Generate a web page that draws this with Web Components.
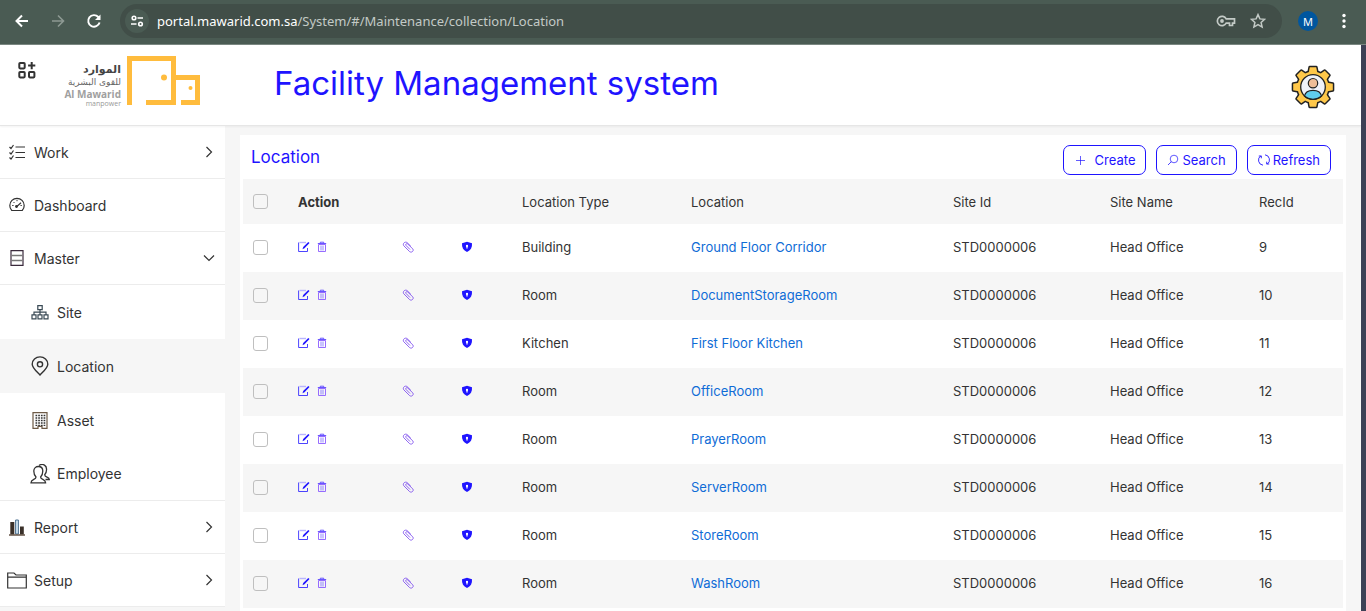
<!DOCTYPE html>
<html lang="en">
<head>
<meta charset="utf-8">
<title>Facility Management system</title>
<style>
  body { margin: 0; height: 100vh; overflow: hidden; font-family: Inter, "Noto Sans", sans-serif; font-size: 13px; color: #333; background: #f6f6f6; --accent: #1f14ff; --line: #ececec; }
</style>
</head>
<body>
<facility-app></facility-app>
<script>
const ICONS = {
  back: ['0 0 16 16', '<path d="M14 8H2.5M8 2.5L2.5 8L8 13.500" fill="none" stroke="currentColor" stroke-width="2"/>'],
  forward: ['0 0 16 16', '<path d="M2 8h11.500M8 2.500L13.500 8L8 13.500" fill="none" stroke="currentColor" stroke-width="1.600"/>'],
  reload: ['0 0 16 16', '<path d="M13.600 9.500A5.800 5.800 0 1 1 12.300 4L13.600 5.400" fill="none" stroke="currentColor" stroke-width="1.900"/><path d="M14.500 1.500V7H9z" fill="currentColor"/>'],
  tune: ['0 0 14 14', '<g fill="none" stroke="currentColor" stroke-width="1.600"><circle cx="4" cy="4" r="1.800"/><path d="M7.500 4H13M1 10h5.500"/><circle cx="10.500" cy="10" r="1.800"/></g>'],
  key: ['0 0 20 14', '<g fill="none" stroke="currentColor" stroke-width="1.700"><path d="M10.200 4.800A4.700 4.700 0 1 0 10.200 9.200H12.500V9.200H13.500V11.500H16.500V9.200H18.500V4.800Z"/></g><circle cx="6" cy="7" r="1.900" fill="currentColor"/>'],
  star: ['0 0 16 16', '<path d="M8 1.600l1.900 4.300 4.700.450-3.500 3.100 1 4.600L8 11.700l-4.100 2.350 1-4.600L1.400 6.350l4.700-.450z" fill="none" stroke="currentColor" stroke-width="1.500"/>'],
  dots: ['0 0 16 16', '<g fill="currentColor"><circle cx="8" cy="2.500" r="1.700"/><circle cx="8" cy="8" r="1.700"/><circle cx="8" cy="13.500" r="1.700"/></g>'],
  apps: ['0 0 18 18', '<g fill="none" stroke="currentColor" stroke-width="2"><rect x="1.300" y="2" width="5.400" height="5.400" rx=".8"/><rect x="1.300" y="11" width="5.400" height="5.400" rx=".8"/><rect x="11" y="11" width="5.400" height="5.400" rx=".8"/><path d="M13.700 1v7.200M10.100 4.600h7.200"/></g>'],
  work: ['0 0 16 16', '<g fill="none" stroke="currentColor" stroke-width="1.200"><path d="M6.500 3H16M6.500 8.500H16M6.500 13.500H16M.5 3l1.500 1.500L4.500 1M.5 8.500L2 10l2.500-3.500M.5 13.500L2 15l2.500-3.500"/></g>'],
  dashboard: ['0 0 16 16', '<path d="M2.800 13.500A7.200 7.200 0 1 1 13.200 13.500Z" fill="none" stroke="currentColor" stroke-width="1.200"/><path d="M8 2.800v1.400M3.200 8.500H4.600M4.500 5l1 1M11.500 8.500h1.300" stroke="currentColor"/><path d="M7 10.200L12 5.800" stroke="currentColor" stroke-width="1.200"/><circle cx="7.500" cy="9.500" r="1.400" fill="currentColor"/>'],
  master: ['0 0 16 16', '<path d="M2 .6H14V15.400H2Z" fill="none" stroke="#3a2a3c" stroke-width="1.200"/><path d="M2.500 5.500h11M2.500 10.500h11" stroke="#777" stroke-width="1.700"/>'],
  site: ['0 0 18 16', '<g fill="none" stroke="#3a4a55" stroke-width="1.200"><path d="M6.800 1.600h4.400v4H6.800zM1 10.800h4v4H1zM7 10.800h4v4H7zM13 10.800h4v4h-4zM9 5.600v5M3 10.800V8.200h12v2.600"/></g>'],
  location: ['0 0 18 20', '<path d="M9 19C6.800 16.600 1.200 12 1.200 8.200a7.800 7.300 0 0 1 15.600 0C16.800 12 11.200 16.600 9 19Z" fill="none" stroke="currentColor" stroke-width="1.400"/><circle cx="9" cy="8.300" r="2.600" fill="none" stroke="currentColor" stroke-width="1.400"/>'],
  asset: ['0 0 16 17', '<path d="M1 .7h14v15.600h-5v-2H6v2H1Z" fill="none" stroke="#6d5a46" stroke-width="1.200"/><path d="M3.500 3.500h10M3.500 6h10M3.500 8.500h10M3.500 11h10M3.500 13.300h10" stroke="currentColor" stroke-width="1.300" stroke-dasharray="1.700 1"/>'],
  employee: ['0 0 20 20', '<g fill="none" stroke="currentColor" stroke-width="1.300"><path d="M1 18.800c0-4 5-2.800 5-5.800C4.500 11.500 3.800 9.500 3.800 7c0-6 9-6 9 0 0 2.500-.8 4.500-2.200 6 0 3 5 1.800 5 5.800z"/><path d="M9 1.500c4-2.500 8 0 7.500 4.500 0 2-.700 3.500-1.800 4.700 0 3 4.600 1.800 4.600 4.800h-3.800"/></g>'],
  report: ['0 0 16 17', '<path d="M1.300 3h4v12.500h-4zM11 7.500h3.800v8H11z" fill="#3a3029"/><path d="M6.600 1h2.800v14H6.600z" fill="#cfe4f2" stroke="#4a6f8f"/><path d="M0 16h16" stroke="#5a4738" stroke-width="1.400"/>'],
  setup: ['0 0 20 17', '<path d="M.7 16V1H7l2 2h10.300v13ZM.7 5.200h18.600" fill="none" stroke="currentColor" stroke-width="1.200"/>'],
  right: ['0 0 12 12', '<path d="M3.500 1L8.500 6L3.500 11" fill="none" stroke="currentColor" stroke-width="1.200"/>'],
  down: ['0 0 12 12', '<path d="M1 3.500L6 8.500L11 3.500" fill="none" stroke="currentColor" stroke-width="1.200"/>'],
  plus: ['0 0 12 12', '<path d="M6.500 2v9M2 6.500h9" stroke="currentColor" stroke-width=".7"/>'],
  search: ['0 0 12 12', '<circle cx="7" cy="5" r="3.800" fill="none" stroke="currentColor" stroke-width=".7"/><path d="M4.300 7.700L1 11" stroke="currentColor" stroke-width=".8"/>'],
  refresh: ['0 0 12 12', '<path d="M5 11.200A5.100 5.100 0 0 1 2.900 1.800M7 .8a5.100 5.100 0 0 1 2.100 9.400M.8 2h2.500v2.300M11.200 10H8.700V7.700" fill="none" stroke="currentColor" stroke-width=".9"/>'],
  edit: ['0 0 12 12', '<path d="M8 1.500H1.500" stroke="#b9b4ff" stroke-width="1.400"/><path d="M.6 1.500v9h8.900V7" fill="none" stroke="currentColor" stroke-width=".8"/><path d="M4.500 8.200l.7-2.200L10.300.9l1.200 1.200L6.500 7.300z" fill="currentColor"/>'],
  trash: ['0 0 10 12', '<path d="M1.500 3.500h7v7h-7z" fill="none" stroke="#8a5cff" stroke-width=".9"/><path d="M.8 2.500h8.400M3.300 2.300V1.200h3.400v1.100" fill="none" stroke="#5a45ff" stroke-width=".9"/><path d="M4 4.500v5M6 4.500v5" stroke="#7a6bff" stroke-width=".8"/>'],
  clip: ['0 0 12 12', '<path d="M8.800 5.200L5 1.500C3 .2.300 2.600 1.700 4.700L7.600 10.600c2 1.500 4.500-.7 3.300-2.600L5.600 2.900C4.500 2.200 3.200 3.300 3.900 4.300L8 8.500" fill="none" stroke="#7440ee" stroke-width=".8"/>'],
  shield: ['0 0 12 12', '<path d="M6 .8L11 2.200C11.300 6.500 9.600 9.400 6 11C2.400 9.400.700 6.500 1 2.200Z" fill="currentColor"/><path d="M6 4v3.400" stroke="#fff" stroke-width="1.200"/><circle cx="6" cy="4.900" r="1.100" fill="#fff"/>'],
  logo: ['0 0 73 49', '<path d="M2.500 49V2.500H46.500V46.500H19M49 21.500H70.500V46.500H54" fill="none" stroke="#ffbc3d" stroke-width="5"/><circle cx="37" cy="21.500" r="3" fill="#ffbc3d"/><circle cx="63.500" cy="32" r="2" fill="#ffbc3d"/>'],
};
const tooth = 'M17.500 9L18.800 2.200H25.200L26.500 9Z';
const gear = [0, 45, 90, 135, 180, 225, 270, 315].map(a => `<path d="${tooth}" transform="rotate(${a} 22 22)"/>`).join('') + '<circle cx="22" cy="22" r="15.500"/>';
ICONS.gear = ['0 0 44 44', `<g fill="#222" stroke="#222" stroke-width="3" stroke-linejoin="round">${gear}</g><g fill="#ffc84a">${gear}</g><circle cx="22" cy="22" r="12.300" fill="#f0f2fa" stroke="#222" stroke-width="1.300"/><path d="M13.500 31C15 23.500 29 23.500 30.500 31C26 35.300 18 35.300 13.500 31Z" fill="#60cdee" stroke="#222" stroke-width="1.200"/><circle cx="22" cy="18.200" r="4.700" fill="#efbd98" stroke="#222" stroke-width="1.200"/>`];

const define = (name, html, setup) => customElements.define(name, class extends HTMLElement {
  connectedCallback() {
    if (this.shadowRoot) return;
    const t = document.createElement('template');
    t.innerHTML = typeof html === 'function' ? html(this) : html;
    this.attachShadow({ mode: 'open' }).append(t.content.cloneNode(true));
    if (setup) setup(this);
  }
});

define('ui-icon', el => {
  const [box, body] = ICONS[el.getAttribute('name')];
  return `<style>:host{display:inline-flex;flex:none;width:16px;height:16px}svg{width:100%;height:100%}</style><svg viewBox="${box}" aria-hidden="true">${body}</svg>`;
});

define('browser-bar', `<style>
  :host{display:flex;align-items:center;box-sizing:border-box;height:45px;padding:0 14px 2px 14px;background:#4a5b53;border-bottom:1px solid #7a8781;color:#fff;font:13px "Noto Sans",sans-serif}
  button{all:unset;display:flex;width:16px;height:16px;margin-right:20px}
  .next{color:#8d9993}
  .reload{margin-right:28px}
  form{flex:1;display:flex;align-items:center;height:34px;margin:0 16px 0 -10px;padding:0 16px 0 5px;border-radius:17px;background:#414e48;box-sizing:border-box}
  .tune{display:flex;align-items:center;justify-content:center;width:24px;height:24px;border-radius:50%;background:#4a5b53;margin-right:8px}
  .tune ui-icon{width:14px;height:14px}
  .url{flex:1;color:#c3cac6;white-space:nowrap}.url b{font-weight:400;color:#fff}
  .key{width:20px;height:14px;margin-right:14px;color:#c3cac6}.star{color:#c3cac6}
  .me{display:flex;align-items:center;justify-content:center;width:20px;height:20px;border-radius:50%;background:#00569f;font-size:11px;margin-right:18px}
  .menu{margin-right:0}
</style>
<button aria-label="Back"><ui-icon name="back"></ui-icon></button><button class="next" aria-label="Forward"><ui-icon name="forward"></ui-icon></button><button class="reload" aria-label="Reload"><ui-icon name="reload"></ui-icon></button>
<form><span class="tune"><ui-icon name="tune"></ui-icon></span><span class="url"><b>portal.mawarid.com.sa</b>/System/#/Maintenance/collection/Location</span><ui-icon class="key" name="key"></ui-icon><ui-icon class="star" name="star"></ui-icon></form>
<span class="me">M</span><button class="menu" aria-label="Menu"><ui-icon name="dots"></ui-icon></button>`);

define('brand-logo', `<style>
  :host{display:flex;align-items:flex-start;gap:6px}
  .t{display:flex;flex-direction:column;align-items:flex-end;width:56px;padding-top:8px;white-space:nowrap;color:#999}
  .a{font:bold 11px/12px "DejaVu Sans",sans-serif;color:#444}
  .b{font:9px/13px "DejaVu Sans",sans-serif;color:#666}
  .c{font:bold 10px/11px "Open Sans",sans-serif;color:#a0a0a0}
  .d{font:7px/8px "Open Sans",sans-serif}
  ui-icon{width:73px;height:49px}
</style><div class="t"><span class="a" lang="ar" dir="rtl">الموارد</span><span class="b" lang="ar" dir="rtl">للقوى البشرية</span><span class="c">Al Mawarid</span><span class="d">manpower</span></div><ui-icon name="logo"></ui-icon>`);

define('app-header', `<style>
  :host{display:flex;align-items:flex-start;box-sizing:border-box;height:81px;padding:0 26px 0 18px;background:#fff;border-bottom:1px solid #e6e6e6;box-shadow:0 1px 2px #0000000d;position:relative}
  button{all:unset;display:flex}
  .apps{padding-top:16px;margin-right:29px}.apps ui-icon{width:18px;height:18px}
  brand-logo{padding-top:11px}
  h1{flex:1;margin:0 0 0 74px;font-weight:400;font-size:33px;line-height:76px;color:var(--accent);white-space:nowrap}
  .user{padding-top:20px}.user ui-icon{width:44px;height:44px}
</style><button class="apps" aria-label="Applications"><ui-icon name="apps"></ui-icon></button><brand-logo></brand-logo><h1>Facility Management system</h1><button class="user" aria-label="Account"><ui-icon name="gear"></ui-icon></button>`);

define('nav-item', el => `<style>
  :host{display:block;background:#fff}
  :host([selected]){background:#f6f6f6}
  a{display:flex;align-items:center;box-sizing:border-box;height:53px;padding:0 10px 0 7px;border-bottom:1px solid var(--line);color:#333;text-decoration:none;font-size:14px}
  :host([sub]) a{height:54px;padding-left:30px;border:0}
  :host([last]) a{border-bottom:1px solid var(--line)}
  .i{display:flex;justify-content:center;width:20px;margin-right:7px}
  .text{flex:1}
  .chev{width:12px;height:12px}
  .work,.dashboard,.master{width:16px}.site,.location{width:18px}.location,.employee{width:20px;height:20px}.asset,.report{height:17px}.setup{width:20px;height:17px}
</style><a href="#${el.getAttribute('icon')}"><span class="i"><ui-icon class="${el.getAttribute('icon')}" name="${el.getAttribute('icon')}"></ui-icon></span><span class="text"><slot></slot></span>${el.hasAttribute('chevron') ? `<ui-icon class="chev" name="${el.getAttribute('chevron')}"></ui-icon>` : ''}</a>`);

define('side-nav', `<style>:host{display:block;width:225px;flex:none}nav{background:#fff}</style><nav>
<nav-item icon="work" chevron="right">Work</nav-item><nav-item icon="dashboard">Dashboard</nav-item><nav-item icon="master" chevron="down">Master</nav-item>
<nav-item sub icon="site">Site</nav-item><nav-item sub selected icon="location">Location</nav-item><nav-item sub icon="asset">Asset</nav-item><nav-item sub last icon="employee">Employee</nav-item>
<nav-item icon="report" chevron="right">Report</nav-item><nav-item icon="setup" chevron="right">Setup</nav-item></nav>`);

define('tool-button', el => `<style>
  button{display:flex;align-items:center;box-sizing:border-box;height:30px;padding:0 10px;gap:3px;border:1px solid var(--accent);border-radius:7px;background:#fff;color:var(--accent);font:inherit;white-space:nowrap}
  :host([icon=plus]) button{gap:9px}
  ui-icon{width:12px;height:12px}
</style><button><ui-icon name="${el.getAttribute('icon')}"></ui-icon><slot></slot></button>`);

const ROWS = [['Building','Ground Floor Corridor',9],['Room','DocumentStorageRoom',10],['Kitchen','First Floor Kitchen',11],['Room','OfficeRoom',12],['Room','PrayerRoom',13],['Room','ServerRoom',14],['Room','StoreRoom',15],['Room','WashRoom',16]];

define('location-table', () => `<style>
  :host{display:block}
  table{width:100%;table-layout:fixed;border-collapse:collapse}
  th,td{padding:0;text-align:left;font-weight:400;white-space:nowrap}
  th{height:45px;background:#f6f6f6}td{height:46px;padding-bottom:2px}
  th.act{font-weight:700}
  tbody tr:nth-child(even){background:#f6f6f6}
  .check{width:55px}.edit{width:104px}.clip{width:59px}.shield{width:61px}.type{width:169px}.site{width:157px}.name{width:149px}.rec{width:84px}
  th:first-child,td:first-child{padding-left:10px}
  input{appearance:none;display:block;width:15px;height:15px;margin:0;border:1px solid #bfbfbf;border-radius:3px;background:#fff0}
  .acts{display:flex;gap:7px}
  button{all:unset;display:flex;color:var(--accent)}
  ui-icon{width:12px;height:12px}.t ui-icon{width:10px;height:12px}
  a{color:#0f6cd6;text-decoration:none}
</style><table><colgroup><col class="check"><col class="edit"><col class="clip"><col class="shield"><col class="type"><col><col class="site"><col class="name"><col class="rec"></colgroup>
<thead><tr><th><input type="checkbox" aria-label="Select all"></th><th class="act" colspan="3">Action</th><th>Location Type</th><th>Location</th><th>Site Id</th><th>Site Name</th><th>RecId</th></tr></thead>
<tbody>${ROWS.map(([type, place, id]) => `<tr><td><input type="checkbox" aria-label="Select ${place}"></td><td><div class="acts"><button aria-label="Edit"><ui-icon name="edit"></ui-icon></button><button class="t" aria-label="Delete"><ui-icon name="trash"></ui-icon></button></div></td><td><button aria-label="Attachments"><ui-icon name="clip"></ui-icon></button></td><td><button aria-label="Security"><ui-icon name="shield"></ui-icon></button></td><td>${type}</td><td><a href="#${id}">${place}</a></td><td>STD0000006</td><td>Head Office</td><td>${id}</td></tr>`).join('')}</tbody></table>`);

define('location-panel', `<style>
  :host{display:block;flex:1;min-width:0;margin:9px 15px 0;padding:0 3px 100px;background:#fff}
  header{display:flex;align-items:center;height:44px;padding:0 12px 0 8px;gap:10px}
  h2{flex:1;margin:0;font-size:17px;font-weight:400;color:var(--accent)}
  tool-button{padding-top:6px}
</style><header><h2>Location</h2><tool-button icon="plus">Create</tool-button><tool-button icon="search">Search</tool-button><tool-button icon="refresh">Refresh</tool-button></header><location-table></location-table>`);

define('facility-app', `<style>
  :host{display:flex;flex-direction:column;height:100vh}
  .view{flex:1;min-height:0;overflow:hidden;border-right:5px solid #3c4055}
  main{display:flex;align-items:flex-start}
</style><browser-bar></browser-bar><div class="view"><app-header></app-header><main><side-nav></side-nav><location-panel></location-panel></main></div>`);
</script>
</body>
</html>
